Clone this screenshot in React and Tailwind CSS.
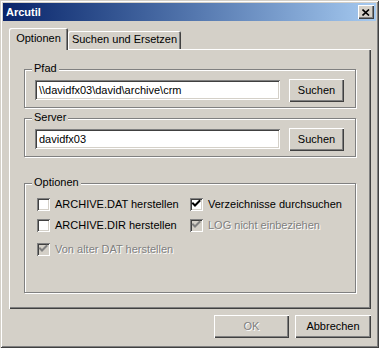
import React from 'react';

const font = "font-['Liberation_Sans',Arial,sans-serif]";

const raised = 'shadow-[inset_1px_1px_#fff,inset_-1px_-1px_#404040,inset_-2px_-2px_#808080]';
const sunken = 'shadow-[inset_1px_1px_#808080,inset_-1px_-1px_#fff,inset_2px_2px_#404040,inset_-2px_-2px_#d4d0c8]';
const etched = 'border border-[#808080] shadow-[inset_1px_1px_#fff,1px_1px_#fff]';
const disabledText = 'text-[#808080] [text-shadow:1px_1px_0_#fff]';

const Check = ({ gray }) => (
  <svg width="13" height="13" viewBox="0 0 13 13" className="absolute left-0 top-0">
    <path d="M3 5.5 L5 7.5 L9.5 3" fill="none" stroke={gray ? '#808080' : '#000'} strokeWidth="2" strokeLinecap="square" />
  </svg>
);

const CheckBox = ({ checked, disabled, label }) => (
  <div className="flex items-center h-[13px]">
    <div className={`relative w-[13px] h-[13px] shrink-0 ${disabled ? 'bg-[#d4d0c8]' : 'bg-white'} ${sunken}`}>
      {checked && <Check gray={disabled} />}
    </div>
    <span className={`ml-[5px] text-[11px] leading-[13px] whitespace-nowrap ${disabled ? disabledText : 'text-black'}`}>{label}</span>
  </div>
);

const Button = ({ children, disabled, className = '' }) => (
  <button className={`bg-[#d4d0c8] ${raised} text-[11px] leading-[13px] flex items-center justify-center ${disabled ? disabledText : 'text-black'} ${className}`}>
    {children}
  </button>
);

const Group = ({ label, className = '', children }) => (
  <div className={`relative ${etched} ${className}`}>
    <span className="absolute left-[7px] -top-[8px] px-[2px] bg-[#d4d0c8] text-[11px] leading-[13px] text-black">{label}</span>
    {children}
  </div>
);

const PathRow = ({ value }) => (
  <div className="flex items-start pl-[10px]">
    <div className={`mt-[10px] w-[245px] h-[20px] bg-white ${sunken} px-[4px] text-[11px] leading-[20px] text-black whitespace-nowrap overflow-hidden`}>
      {value}
    </div>
    <Button className="ml-[9px] mt-[9px] w-[55px] h-[23px]">Suchen</Button>
  </div>
);

const App = () => {
  return (
    <div className={`${font} w-[379px] h-[348px] bg-[#d4d0c8] p-[3px] shadow-[inset_1px_1px_#d4d0c8,inset_-1px_-1px_#404040,inset_2px_2px_#fff,inset_-2px_-2px_#808080] overflow-hidden`}>
      <div className="h-[18px] bg-linear-to-r from-[#0a246a] to-[#a6caf0] flex items-center justify-between pl-[3px] pr-[2px]">
        <span className="text-white font-bold text-[11px] leading-[13px]">Arcutil</span>
        <div className={`w-[16px] h-[14px] bg-[#d4d0c8] ${raised} flex items-center justify-center`}>
          <svg width="8" height="7" viewBox="0 0 8 7">
            <path d="M0.5 0.5 L7 6.5 M7 0.5 L0.5 6.5" stroke="#000" strokeWidth="1.6" />
          </svg>
        </div>
      </div>

      <div className="flex items-end ml-[6px] mt-[7px] h-[21px]">
        <div className="relative z-10 w-[59px] h-[22px] -mb-[1px] bg-[#d4d0c8] rounded-t-[2px] shadow-[inset_1px_1px_#fff,inset_-1px_0_#404040,inset_-2px_0_#808080] flex items-start justify-center pt-[4px] text-[11px] leading-[13px] text-black">
          Optionen
        </div>
        <div className="w-[113px] h-[18px] bg-[#d4d0c8] rounded-t-[2px] shadow-[inset_1px_1px_#fff,inset_-1px_0_#404040,inset_-2px_0_#808080] flex items-start justify-center pt-[2px] text-[11px] leading-[13px] text-black">
          Suchen und Ersetzen
        </div>
      </div>

      <div className={`ml-[6px] w-[362px] h-[260px] bg-[#d4d0c8] ${raised} pl-[15px] pt-[20px]`}>
        <Group label="Pfad" className="w-[332px] h-[39px]">
          <PathRow value="\\davidfx03\david\archive\crm" />
        </Group>
        <Group label="Server" className="w-[332px] h-[39px] mt-[10px]">
          <PathRow value="davidfx03" />
        </Group>
        <Group label="Optionen" className="w-[332px] h-[110px] mt-[26px]">
          <div className="grid grid-cols-[153px_auto] pl-[12px] pt-[14px] gap-y-[8px]">
            <CheckBox label="ARCHIVE.DAT herstellen" />
            <CheckBox checked label="Verzeichnisse durchsuchen" />
            <CheckBox label="ARCHIVE.DIR herstellen" />
            <CheckBox checked disabled label="LOG nicht einbeziehen" />
            <div className="mt-[3px]">
              <CheckBox checked disabled label="Von alter DAT herstellen" />
            </div>
          </div>
        </Group>
      </div>

      <div className="flex justify-end gap-[6px] w-[368px] mt-[6px]">
        <Button disabled className="w-[75px] h-[23px]">OK</Button>
        <Button className="w-[76px] h-[23px]">Abbrechen</Button>
      </div>
    </div>
  );
};

export default App;
